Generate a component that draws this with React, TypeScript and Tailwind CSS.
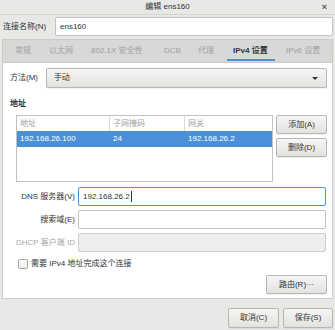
import React from 'react'

const btnBase =
  'flex items-center rounded-[2px] border border-[#b6b6b3] bg-gradient-to-b from-[#f6f6f5] to-[#e2e2df] text-[#2e3436] shadow-[0_1px_0_rgba(0,0,0,0.05)]'
const btn = `${btnBase} justify-center`

// tab label + slot width, measured from the dialog
const TABS: [string, string][] = [
  ['常规', 'w-[34px]'],
  ['以太网', 'w-[42px]'],
  ['802.1X 安全性', 'w-[73px]'],
  ['DCB', 'w-[34px]'],
  ['代理', 'w-[35px]'],
  ['IPv4 设置', 'w-[53px]'],
  ['IPv6 设置', 'w-[40px]'],
]

function Field({ label, value, focused, disabled }: { label: string; value?: string; focused?: boolean; disabled?: boolean }) {
  return (
    <div className="flex items-center">
      <span className={`w-[66px] text-right ${disabled ? 'text-[#a5a7a3]' : 'text-[#2e3436]'}`}>{label}</span>
      <div
        className={`ml-[3px] h-[19px] w-[248px] rounded-[2px] flex items-center px-[4px] ${
          focused
            ? 'border border-[#4a90d9] bg-white'
            : disabled
              ? 'border border-[#cdcdcb] bg-[#eeeeec]'
              : 'border border-[#c3c3c0] bg-white'
        }`}
      >
        {value && (
          <>
            <span>{value}</span>
            <span className="ml-[1px] w-px h-[11px] bg-[#2e3436]" />
          </>
        )}
      </div>
    </div>
  )
}

export default function App() {
  return (
    <div
      className="w-[335px] h-[330px] bg-[#e8e8e7] text-[8px] leading-none text-[#2e3436] flex flex-col overflow-hidden whitespace-nowrap"
      style={{ fontFamily: '"Liberation Sans", "Noto Sans CJK SC", sans-serif' }}
    >
      {/* title bar */}
      <div className="relative h-[15px] flex items-center justify-center border-b border-[#d3d3d0] shrink-0">
        <span>编辑 ens160</span>
        <span className="absolute right-[8px] top-[3px] text-[9px] font-bold text-[#555753]">×</span>
      </div>

      {/* connection name */}
      <div className="flex items-center mt-[2px] pl-[3px] h-[19px] shrink-0">
        <span className="w-[52px]">连接名称(N)</span>
        <div className="h-[19px] w-[278px] bg-white border border-[#c3c3c0] rounded-[2px] flex items-center px-[4px]">
          ens160
        </div>
      </div>

      {/* notebook */}
      <div className="mt-[3px] mx-[2px] flex flex-col shrink-0">
        <div className="h-[23px] bg-[#d8d8d6] border border-b-0 border-[#cbcbc8] flex items-stretch pl-[12px]">
          {TABS.map(([t, w], i) => (
            <div key={t} className={`${w} relative flex items-center ${i === 5 ? 'font-bold text-[#2e3436]' : 'text-[#a0a19e]'}`}>
              {t}
              {i === 5 && <span className="absolute -left-[6px] w-[48px] bottom-[1px] h-[2px] bg-[#4a90d9]" />}
            </div>
          ))}
        </div>

        <div className="h-[237px] bg-white border border-[#cbcbc8] flex flex-col pl-[6px] pr-[5px]">
          {/* method */}
          <div className="mt-[5px] flex items-center">
            <span className="w-[37px] pl-[1px]">方法(M)</span>
            <div className={`${btnBase} justify-between h-[20px] w-[282px] pl-[7px] pr-[8px]`}>
              <span>手动</span>
              <span className="w-0 h-0 border-x-[3px] border-x-transparent border-t-[3px] border-t-[#2e3436]" />
            </div>
          </div>

          <div className="mt-[12px] font-bold ml-[1px]">地址</div>

          {/* address table */}
          <div className="mt-[7px] flex">
            <div className="ml-[7px] w-[257px] h-[67px] border border-[#c3c3c0] flex flex-col">
              <div className="h-[15px] flex text-[#a0a19e]">
                <span className="w-[93px] pl-[3px] flex items-center border-r border-[#dadad8]">地址</span>
                <span className="w-[75px] pl-[3px] flex items-center border-r border-[#dadad8]">子网掩码</span>
                <span className="flex-1 pl-[3px] flex items-center">网关</span>
              </div>
              <div className="h-[16px] flex bg-[#4a90d9] text-white">
                <span className="w-[93px] pl-[3px] flex items-center">192.168.26.100</span>
                <span className="w-[75px] pl-[3px] flex items-center">24</span>
                <span className="flex-1 pl-[3px] flex items-center">192.168.26.2</span>
              </div>
            </div>
            <div className="ml-[3px] flex flex-col gap-[4px]">
              <div className={`${btn} w-[51px] h-[19px]`}>添加(A)</div>
              <div className={`${btn} w-[51px] h-[19px]`}>删除(D)</div>
            </div>
          </div>

          {/* fields */}
          <div className="mt-[5px] flex flex-col gap-[4px]">
            <Field label="DNS 服务器(V)" value="192.168.26.2" focused />
            <Field label="搜索域(E)" />
            <Field label="DHCP 客户端 ID" disabled />
          </div>

          <div className="mt-[7px] ml-[9px] flex items-center">
            <span className="w-[10px] h-[10px] rounded-[2px] border border-[#a5a7a3] bg-gradient-to-b from-white to-[#eeeeec]" />
            <span className="ml-[3px]">需要 IPv4 地址完成这个连接</span>
          </div>

          <div className="mt-[6px] flex justify-end">
            <div className={`${btn} w-[61px] h-[19px]`}>路由(R)···</div>
          </div>
        </div>
      </div>

      {/* dialog buttons */}
      <div className="mt-[9px] flex justify-end pr-[2px] gap-[4px]">
        <div className={`${btn} w-[51px] h-[20px]`}>取消(C)</div>
        <div className={`${btn} w-[50px] h-[20px]`}>保存(S)</div>
      </div>
    </div>
  )
}
